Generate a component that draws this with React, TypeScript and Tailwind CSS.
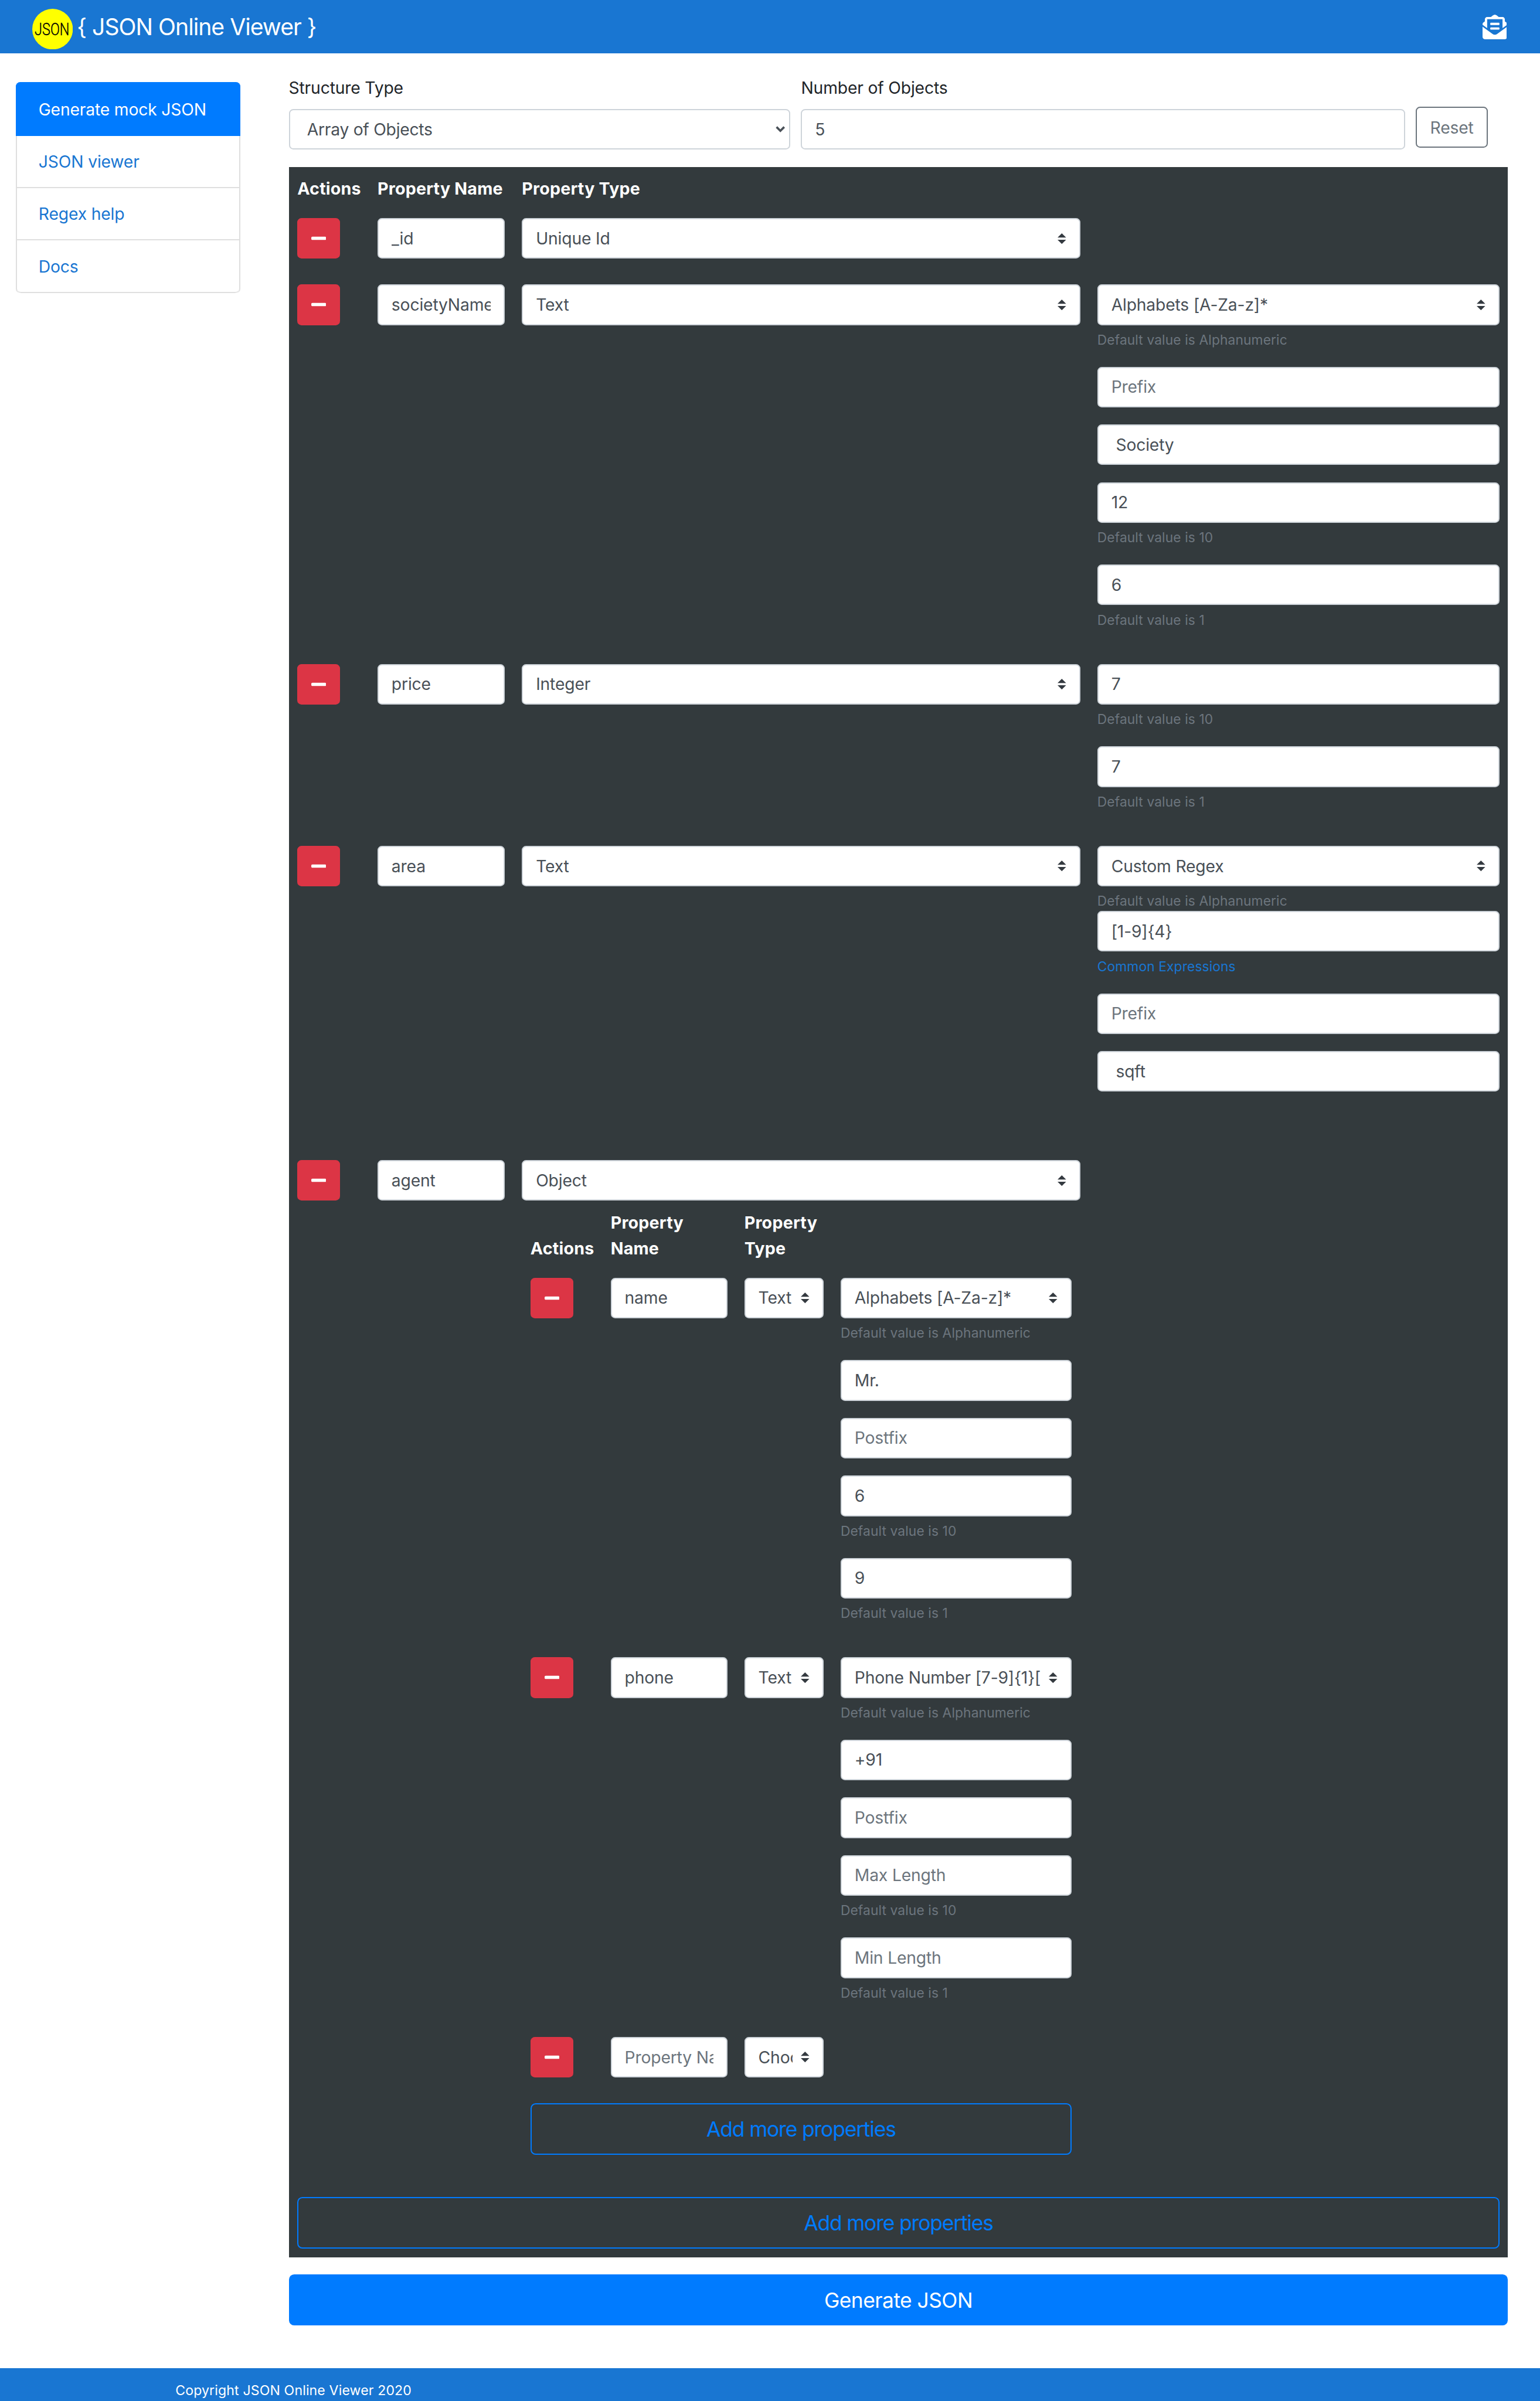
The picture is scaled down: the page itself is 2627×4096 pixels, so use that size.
import type { ReactNode } from "react";
import { FaEnvelopeOpenText, FaMinus } from "react-icons/fa";

const fieldBase =
  "flex h-19 items-center rounded-[7.3px] border-2 border-[#ced4da] bg-white text-[28.3px] tracking-[-0.18px]";

function Field({ value, placeholder, className = "w-full" }: { value?: string; placeholder?: string; className?: string }) {
  return (
    <div className={`${fieldBase} px-6 ${className} ${value ? "text-[#495057]" : "text-[#6c757d]"}`}>
      <span className="min-w-0 flex-1 overflow-hidden pt-0.5 leading-12 whitespace-pre">{value ?? placeholder}</span>
    </div>
  );
}

function Select({ value, className = "w-full" }: { value: string; className?: string }) {
  return (
    <div className={`${fieldBase} gap-4 px-6 text-[#495057] ${className}`}>
      <span className="min-w-0 flex-1 overflow-hidden pt-0.5 leading-12 whitespace-pre">{value}</span>
      <svg viewBox="0 0 4 5" className="h-5 w-4 shrink-0 fill-[#343a40]">
        <path d="M2 0L0 2h4zm0 5L0 3h4z" />
      </svg>
    </div>
  );
}

function Hint({ children, link = false }: { children: ReactNode; link?: boolean }) {
  return (
    <div className={`mt-2 h-9.5 pt-0.25 text-[22.8px] leading-9.5 tracking-[0.1px] whitespace-nowrap ${link ? "text-[#1976d2]" : "text-[#6c757d]"}`}>
      {children}
    </div>
  );
}

function RemoveCell() {
  return (
    <div className="w-29.5 shrink-0">
      <button className="flex h-19 w-20 items-center justify-center rounded-[7.3px] bg-[#dc3545] text-white">
        <FaMinus className="h-8 w-7" />
      </button>
    </div>
  );
}

function Group({ children }: { children: ReactNode }) {
  return <div className="mb-8">{children}</div>;
}

type TextOptionsProps = { pattern: string; prefix?: string; postfix?: string; max?: string; min?: string };

function TextOptions({ pattern, prefix, postfix, max, min }: TextOptionsProps) {
  return (
    <>
      <Group>
        <Select value={pattern} />
        <Hint>Default value is Alphanumeric</Hint>
      </Group>
      <Group>
        <Field value={prefix} placeholder="Prefix" />
      </Group>
      <Group>
        <Field value={postfix} placeholder="Postfix" />
      </Group>
      <LengthOptions max={max} min={min} />
    </>
  );
}

function LengthOptions({ max, min }: { max?: string; min?: string }) {
  return (
    <>
      <Group>
        <Field value={max} placeholder="Max Length" />
        <Hint>Default value is 10</Hint>
      </Group>
      <Group>
        <Field value={min} placeholder="Min Length" />
        <Hint>Default value is 1</Hint>
      </Group>
    </>
  );
}

function Row({ name, type, children }: { name: string; type: string; children?: ReactNode }) {
  return (
    <div className={`flex items-start gap-8 ${children ? "mb-8" : "mb-12"}`}>
      <RemoveCell />
      <Field value={name} className="w-59.5 shrink-0" />
      <Select value={type} className="w-261 shrink-0" />
      {children && <div className="w-188 shrink-0">{children}</div>}
    </div>
  );
}

function NestedRow({ name, type, children }: { name?: string; type: string; children?: ReactNode }) {
  return (
    <div className={`flex items-start gap-8 ${children ? "mb-8" : "mb-12"}`}>
      <RemoveCell />
      <Field value={name} placeholder="Property Name" className="w-54.5 shrink-0" />
      <Select value={type} className="w-37 shrink-0" />
      {children && <div className="w-108 shrink-0">{children}</div>}
    </div>
  );
}

function AddButton() {
  return (
    <button className="flex h-24 w-full items-center justify-center rounded-[8.8px] border-2 border-[#007bff] pt-0.25 text-[35.4px] tracking-[-1.15px] text-[#007bff]">
      Add more properties
    </button>
  );
}

const links = ["JSON viewer", "Regex help", "Docs"];

export default function App() {
  return (
    <div className="flex h-[4096px] w-full flex-col overflow-hidden bg-white font-['Inter',sans-serif] text-[#212529] [--spacing:3.6488px]">
      <header className="flex h-25 shrink-0 items-center justify-between bg-[#1976d2] pr-15.5 pl-15 text-white">
        <div className="flex items-center gap-2">
          <svg viewBox="0 0 76 76" className="mt-2 size-19">
            <circle cx="38" cy="38" r="38" fill="#ffff00" />
            <text x="4.5" y="49.5" fontFamily="Roboto" fontWeight="300" fontSize="32" textLength="65" lengthAdjust="spacingAndGlyphs" fill="#000" stroke="#000" strokeWidth="0.4">
              JSON
            </text>
          </svg>
          <span className="pt-0.5 text-[39.2px] tracking-[-1px] whitespace-nowrap">{"{ JSON Online Viewer }"}</span>
        </div>
        <FaEnvelopeOpenText className="size-11.5" />
      </header>

      <main className="flex h-[3949px] shrink-0 items-start pl-7.5">
        <nav className="mt-13.5 w-105 shrink-0 text-[28.3px] tracking-[-0.18px]">
          <div className="flex h-25 items-center rounded-t-[7.3px] bg-[#007bff] pt-0.5 pl-10.5 text-white">Generate mock JSON</div>
          <div className="overflow-hidden rounded-b-[7.3px] border-x-2 border-[#dfdfdf] text-[#1976d2]">
            {links.map((link) => (
              <div key={link} className="flex h-24.5 items-center border-b-2 border-[#dfdfdf] pt-0.5 pl-10 last:rounded-b-[7.3px]">
                {link}
              </div>
            ))}
          </div>
        </nav>

        <section className="mt-10 ml-22.5 w-570 shrink-0">
          <div className="flex items-end gap-5 text-[28.3px] tracking-[-0.18px]">
            <div className="w-234.5">
              <div className="mb-3.75 pt-0.25 leading-12">Structure Type</div>
              <div className={`${fieldBase} justify-between pr-1.75 pl-8 text-[#495057]`}>
                <span className="pt-0.5 tracking-[-0.28px]">Array of Objects</span>
                <svg viewBox="0 0 18 12" className="h-3 w-4.5" fill="none" stroke="#495057" strokeWidth="4">
                  <path d="M1.8 1.8L9 9L16.2 1.8" />
                </svg>
              </div>
            </div>
            <div className="w-282.5">
              <div className="mb-3.75 pt-0.25 leading-12">Number of Objects</div>
              <Field value="5" />
            </div>
            <button className="mb-1 flex h-19 w-33.5 items-center justify-center rounded-[7.3px] border-2 border-[#6c757d] pt-0.5 text-[#6c757d]">
              Reset
            </button>
          </div>

          <div className="mt-8 bg-[#333a3d] px-4 pt-4 pb-4">
            <div className="mb-7.75 flex gap-8 pt-0.25 text-[28.65px] leading-12 font-bold tracking-[0.2px] whitespace-nowrap text-white">
              <div className="w-29.5">Actions</div>
              <div className="w-59.5">Property Name</div>
              <div>Property Type</div>
            </div>

            <Row name="_id" type="Unique Id" />
            <Row name="societyName" type="Text">
              <TextOptions pattern="Alphabets [A-Za-z]*" postfix=" Society" max="12" min="6" />
            </Row>
            <Row name="price" type="Integer">
              <LengthOptions max="7" min="7" />
            </Row>
            <Row name="area" type="Text">
              <Select value="Custom Regex" />
              <Hint>Default value is Alphanumeric</Hint>
              <Group>
                <Field value="[1-9]{4}" />
                <Hint link>Common Expressions</Hint>
              </Group>
              <Group>
                <Field placeholder="Prefix" />
              </Group>
              <div className="mb-24">
                <Field value=" sqft" />
              </div>
            </Row>

            <div className="flex items-start gap-8">
              <RemoveCell />
              <Field value="agent" className="w-59.5 shrink-0" />
              <div className="w-261 shrink-0">
                <Select value="Object" />
                <div className="px-4 pt-4">
                  <div className="mb-7.75 flex items-end gap-8 pt-0.25 text-[28.65px] leading-12 font-bold tracking-[0.2px] text-white">
                    <div className="w-29.5">Actions</div>
                    <div className="w-54.5">Property Name</div>
                    <div className="w-37">Property Type</div>
                  </div>
                  <NestedRow name="name" type="Text">
                    <TextOptions pattern="Alphabets [A-Za-z]*" prefix="Mr." max="6" min="9" />
                  </NestedRow>
                  <NestedRow name="phone" type="Text">
                    <TextOptions pattern="Phone Number [7-9]{1}[0-9]{9}" prefix="+91" />
                  </NestedRow>
                  <NestedRow type="Choose..." />
                  <AddButton />
                </div>
              </div>
            </div>

            <div className="mt-20">
              <AddButton />
            </div>
          </div>

          <button className="mt-8 flex h-24 w-full items-center justify-center rounded-[8.8px] bg-[#007bff] pt-0.25 text-[35.4px] tracking-[-0.55px] text-white">
            Generate JSON
          </button>
        </section>
      </main>

      <footer className="flex-1 bg-[#1976d2] pt-5.75 pl-82 text-[23.1px] leading-9.5 tracking-[0.13px] text-white">
        Copyright JSON Online Viewer 2020
      </footer>
    </div>
  );
}
